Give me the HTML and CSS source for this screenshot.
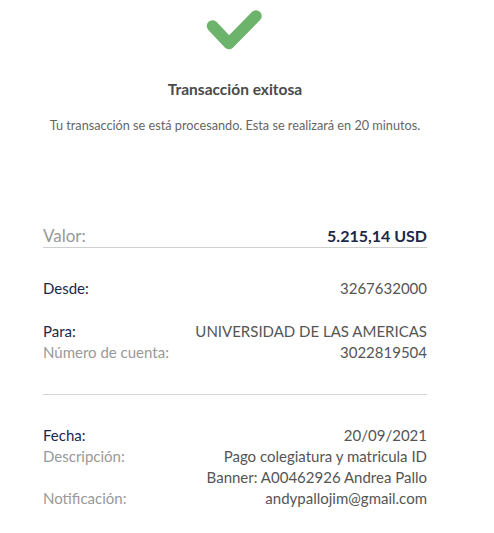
FILE: index.html
```html
<!DOCTYPE html>
<html lang="es">
<head>
<meta charset="utf-8">
<link rel="stylesheet" href="styles.css">
</head>
<body>
<main class="receipt">
  <header class="status">
    <svg class="check" width="70" height="60" viewBox="0 0 70 60" aria-hidden="true">
      <polyline points="12.5,26 29,43.5 56,16" fill="none" stroke="#6cb36c" stroke-width="11.5" stroke-linecap="round" stroke-linejoin="round"/>
    </svg>
    <h1 class="title">Transacción exitosa</h1>
    <p class="subtitle">Tu transacción se está procesando. Esta se realizará en 20 minutos.</p>
  </header>

  <section class="amount">
    <span class="amount-label">Valor:</span>
    <span class="amount-value">5.215,14 USD</span>
  </section>

  <section class="group group-from">
    <div class="row"><span class="label primary">Desde:</span><span class="value">3267632000</span></div>
  </section>

  <section class="group group-to">
    <div class="row"><span class="label primary">Para:</span><span class="value">UNIVERSIDAD DE LAS AMERICAS</span></div>
    <div class="row"><span class="label">Número de cuenta:</span><span class="value">3022819504</span></div>
  </section>

  <section class="group group-details">
    <div class="row"><span class="label primary">Fecha:</span><span class="value">20/09/2021</span></div>
    <div class="row"><span class="label">Descripción:</span><span class="value">Pago colegiatura y matricula ID<br>Banner: A00462926 Andrea Pallo</span></div>
    <div class="row"><span class="label">Notificación:</span><span class="value">andypallojim@gmail.com</span></div>
  </section>
</main>
</body>
</html>
```

FILE: styles.css
```css
html, body {
  margin: 0;
  padding: 0;
  background: #ffffff;
}

body {
  font-family: Lato, "Open Sans", sans-serif;
  color: #555555;
}

.receipt {
  width: 384px;
  margin-left: 43px;
}

.status {
  display: flex;
  flex-direction: column;
  align-items: center;
}

.check {
  display: block;
}

.title {
  margin: 20px 0 0;
  font-size: 15.5px;
  font-weight: 700;
  color: #4a4a4a;
  line-height: 18px;
}

.subtitle {
  margin: 20px 0 0;
  font-size: 12.7px;
  color: #666666;
  line-height: 14px;
  white-space: nowrap;
}

.amount {
  display: flex;
  justify-content: space-between;
  align-items: baseline;
  margin-top: 93px;
  border-bottom: 1px solid #cfcfcf;
}

.amount-label {
  font-size: 17px;
  color: #999999;
  line-height: 22px;
}

.amount-value {
  font-size: 16px;
  font-weight: 700;
  color: #1d2748;
  line-height: 22px;
}

.group {
  display: flex;
  flex-direction: column;
}

.group-from {
  margin-top: 30px;
}

.group-to {
  margin-top: 22px;
  padding-bottom: 31px;
  border-bottom: 1px solid #d6d6d6;
}

.group-details {
  margin-top: 30px;
}

.row {
  display: flex;
  justify-content: space-between;
  font-size: 15px;
  line-height: 21px;
}

.label {
  color: #999999;
}

.label.primary {
  color: #1d2748;
}

.value {
  text-align: right;
  color: #555555;
}
```
